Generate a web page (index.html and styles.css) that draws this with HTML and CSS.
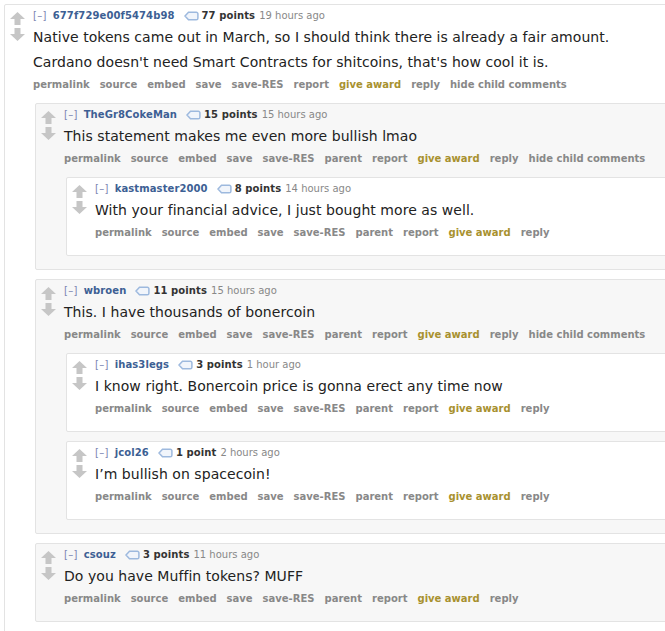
FILE: index.html
```html
<!DOCTYPE html>
<html>
<head>
<meta charset="utf-8">
<link rel="stylesheet" href="styles.css">
</head>
<body>
<div class="thread">
  <div class="comment odd top">
    <div class="arrows">
      <svg class="arrow" viewBox="0 0 15 13" width="15" height="13"><polygon points="7.5,0 15,7 10.5,7 10.5,13 4.5,13 4.5,7 0,7" /></svg>
      <svg class="arrow" viewBox="0 0 15 13" width="15" height="13"><polygon points="7.5,13 15,6 10.5,6 10.5,0 4.5,0 4.5,6 0,6" /></svg>
    </div>
    <div class="main">
      <p class="tagline"><span class="expand">[–]</span><a class="author">677f729e00f5474b98</a><svg class="tag" viewBox="0 0 15 10" width="15" height="10"><path d="M4.5 1.2 H12.3 a1.6 1.6 0 0 1 1.6 1.6 V7.2 a1.6 1.6 0 0 1 -1.6 1.6 H4.5 L1 5 Z"/></svg><span class="score">77 points</span> <span class="time">19 hours ago</span></p>
      <div class="md">
        <p>Native tokens came out in March, so I should think there is already a fair amount.</p>
        <p>Cardano doesn't need Smart Contracts for shitcoins, that's how cool it is.</p>
      </div>
      <ul class="buttons"><li>permalink</li><li>source</li><li>embed</li><li>save</li><li>save-RES</li><li>report</li><li class="award">give award</li><li>reply</li><li>hide child comments</li></ul>
      <div class="children">

        <div class="comment even">
          <div class="arrows">
            <svg class="arrow" viewBox="0 0 15 13" width="15" height="13"><polygon points="7.5,0 15,7 10.5,7 10.5,13 4.5,13 4.5,7 0,7" /></svg>
            <svg class="arrow" viewBox="0 0 15 13" width="15" height="13"><polygon points="7.5,13 15,6 10.5,6 10.5,0 4.5,0 4.5,6 0,6" /></svg>
          </div>
          <div class="main">
            <p class="tagline"><span class="expand">[–]</span><a class="author">TheGr8CokeMan</a><svg class="tag" viewBox="0 0 15 10" width="15" height="10"><path d="M4.5 1.2 H12.3 a1.6 1.6 0 0 1 1.6 1.6 V7.2 a1.6 1.6 0 0 1 -1.6 1.6 H4.5 L1 5 Z"/></svg><span class="score">15 points</span> <span class="time">15 hours ago</span></p>
            <div class="md"><p>This statement makes me even more bullish lmao</p></div>
            <ul class="buttons"><li>permalink</li><li>source</li><li>embed</li><li>save</li><li>save-RES</li><li>parent</li><li>report</li><li class="award">give award</li><li>reply</li><li>hide child comments</li></ul>
            <div class="children">
              <div class="comment odd">
                <div class="arrows">
                  <svg class="arrow" viewBox="0 0 15 13" width="15" height="13"><polygon points="7.5,0 15,7 10.5,7 10.5,13 4.5,13 4.5,7 0,7" /></svg>
                  <svg class="arrow" viewBox="0 0 15 13" width="15" height="13"><polygon points="7.5,13 15,6 10.5,6 10.5,0 4.5,0 4.5,6 0,6" /></svg>
                </div>
                <div class="main">
                  <p class="tagline"><span class="expand">[–]</span><a class="author">kastmaster2000</a><svg class="tag" viewBox="0 0 15 10" width="15" height="10"><path d="M4.5 1.2 H12.3 a1.6 1.6 0 0 1 1.6 1.6 V7.2 a1.6 1.6 0 0 1 -1.6 1.6 H4.5 L1 5 Z"/></svg><span class="score">8 points</span> <span class="time">14 hours ago</span></p>
                  <div class="md"><p>With your financial advice, I just bought more as well.</p></div>
                  <ul class="buttons"><li>permalink</li><li>source</li><li>embed</li><li>save</li><li>save-RES</li><li>parent</li><li>report</li><li class="award">give award</li><li>reply</li></ul>
                </div>
              </div>
            </div>
          </div>
        </div>

        <div class="comment even">
          <div class="arrows">
            <svg class="arrow" viewBox="0 0 15 13" width="15" height="13"><polygon points="7.5,0 15,7 10.5,7 10.5,13 4.5,13 4.5,7 0,7" /></svg>
            <svg class="arrow" viewBox="0 0 15 13" width="15" height="13"><polygon points="7.5,13 15,6 10.5,6 10.5,0 4.5,0 4.5,6 0,6" /></svg>
          </div>
          <div class="main">
            <p class="tagline"><span class="expand">[–]</span><a class="author">wbroen</a><svg class="tag" viewBox="0 0 15 10" width="15" height="10"><path d="M4.5 1.2 H12.3 a1.6 1.6 0 0 1 1.6 1.6 V7.2 a1.6 1.6 0 0 1 -1.6 1.6 H4.5 L1 5 Z"/></svg><span class="score">11 points</span> <span class="time">15 hours ago</span></p>
            <div class="md"><p>This. I have thousands of bonercoin</p></div>
            <ul class="buttons"><li>permalink</li><li>source</li><li>embed</li><li>save</li><li>save-RES</li><li>parent</li><li>report</li><li class="award">give award</li><li>reply</li><li>hide child comments</li></ul>
            <div class="children">
              <div class="comment odd">
                <div class="arrows">
                  <svg class="arrow" viewBox="0 0 15 13" width="15" height="13"><polygon points="7.5,0 15,7 10.5,7 10.5,13 4.5,13 4.5,7 0,7" /></svg>
                  <svg class="arrow" viewBox="0 0 15 13" width="15" height="13"><polygon points="7.5,13 15,6 10.5,6 10.5,0 4.5,0 4.5,6 0,6" /></svg>
                </div>
                <div class="main">
                  <p class="tagline"><span class="expand">[–]</span><a class="author">ihas3legs</a><svg class="tag" viewBox="0 0 15 10" width="15" height="10"><path d="M4.5 1.2 H12.3 a1.6 1.6 0 0 1 1.6 1.6 V7.2 a1.6 1.6 0 0 1 -1.6 1.6 H4.5 L1 5 Z"/></svg><span class="score">3 points</span> <span class="time">1 hour ago</span></p>
                  <div class="md"><p>I know right. Bonercoin price is gonna erect any time now</p></div>
                  <ul class="buttons"><li>permalink</li><li>source</li><li>embed</li><li>save</li><li>save-RES</li><li>parent</li><li>report</li><li class="award">give award</li><li>reply</li></ul>
                </div>
              </div>
              <div class="comment odd">
                <div class="arrows">
                  <svg class="arrow" viewBox="0 0 15 13" width="15" height="13"><polygon points="7.5,0 15,7 10.5,7 10.5,13 4.5,13 4.5,7 0,7" /></svg>
                  <svg class="arrow" viewBox="0 0 15 13" width="15" height="13"><polygon points="7.5,13 15,6 10.5,6 10.5,0 4.5,0 4.5,6 0,6" /></svg>
                </div>
                <div class="main">
                  <p class="tagline"><span class="expand">[–]</span><a class="author">jcol26</a><svg class="tag" viewBox="0 0 15 10" width="15" height="10"><path d="M4.5 1.2 H12.3 a1.6 1.6 0 0 1 1.6 1.6 V7.2 a1.6 1.6 0 0 1 -1.6 1.6 H4.5 L1 5 Z"/></svg><span class="score">1 point</span> <span class="time">2 hours ago</span></p>
                  <div class="md"><p>I’m bullish on spacecoin!</p></div>
                  <ul class="buttons"><li>permalink</li><li>source</li><li>embed</li><li>save</li><li>save-RES</li><li>parent</li><li>report</li><li class="award">give award</li><li>reply</li></ul>
                </div>
              </div>
            </div>
          </div>
        </div>

        <div class="comment even">
          <div class="arrows">
            <svg class="arrow" viewBox="0 0 15 13" width="15" height="13"><polygon points="7.5,0 15,7 10.5,7 10.5,13 4.5,13 4.5,7 0,7" /></svg>
            <svg class="arrow" viewBox="0 0 15 13" width="15" height="13"><polygon points="7.5,13 15,6 10.5,6 10.5,0 4.5,0 4.5,6 0,6" /></svg>
          </div>
          <div class="main">
            <p class="tagline"><span class="expand">[–]</span><a class="author">csouz</a><svg class="tag" viewBox="0 0 15 10" width="15" height="10"><path d="M4.5 1.2 H12.3 a1.6 1.6 0 0 1 1.6 1.6 V7.2 a1.6 1.6 0 0 1 -1.6 1.6 H4.5 L1 5 Z"/></svg><span class="score">3 points</span> <span class="time">11 hours ago</span></p>
            <div class="md"><p>Do you have Muffin tokens? MUFF</p></div>
            <ul class="buttons"><li>permalink</li><li>source</li><li>embed</li><li>save</li><li>save-RES</li><li>parent</li><li>report</li><li class="award">give award</li><li>reply</li></ul>
          </div>
        </div>

      </div>
    </div>
  </div>
</div>
</body>
</html>
```

FILE: styles.css
```css
html, body {
  margin: 0;
  overflow: hidden;
  background: #ffffff;
}
body {
  padding: 4px 0 0 4px;
  font-family: "DejaVu Sans", Verdana, sans-serif;
  color: #222222;
}
.thread {
  width: 820px;
}
.comment {
  display: flex;
  align-items: flex-start;
  border: 1px solid #e3e3e3;
  padding: 4px 0 4px 5px;
  margin-bottom: 9px;
  border-radius: 2px;
}
.comment.odd { background: #ffffff; }
.comment.even { background: #f7f7f7; }
.arrows {
  flex: none;
  width: 15px;
  margin-right: 8px;
  padding-top: 3px;
  display: flex;
  flex-direction: column;
  gap: 3px;
}
.arrow { display: block; }
.arrow polygon { fill: #c6c6c6; }
.main {
  flex: 1;
  min-width: 0;
}
.tagline {
  margin: 0;
  font-size: 10px;
  line-height: 14px;
  height: 14px;
  white-space: nowrap;
  display: flex;
  align-items: center;
}
.expand {
  color: #7b86b3;
  margin-right: 6px;
  letter-spacing: 0.3px;
}
.author {
  color: #3d5f94;
  font-weight: bold;
  margin-right: 9px;
  letter-spacing: 0.1px;
}
.tag {
  flex: none;
  margin-right: 3px;
}
.tag path {
  fill: #f1f5fb;
  stroke: #9db9de;
  stroke-width: 1.5;
}
.score {
  color: #333333;
  font-weight: bold;
  margin-right: 4px;
  letter-spacing: 0.1px;
}
.time { color: #888888; }
.md {
  margin-top: 4px;
}
.md p {
  margin: 0;
  font-size: 14px;
  line-height: 20px;
  color: #222222;
  letter-spacing: 0.05px;
}
.md p + p { margin-top: 5px; }
.buttons {
  list-style: none;
  margin: 6px 0 11px;
  padding: 0;
  display: flex;
  gap: 10px;
  font-size: 10px;
  line-height: 14px;
  font-weight: bold;
  color: #888888;
  white-space: nowrap;
}
.buttons .award { color: #a8912f; }
.children {
  margin-left: 2px;
}
```
